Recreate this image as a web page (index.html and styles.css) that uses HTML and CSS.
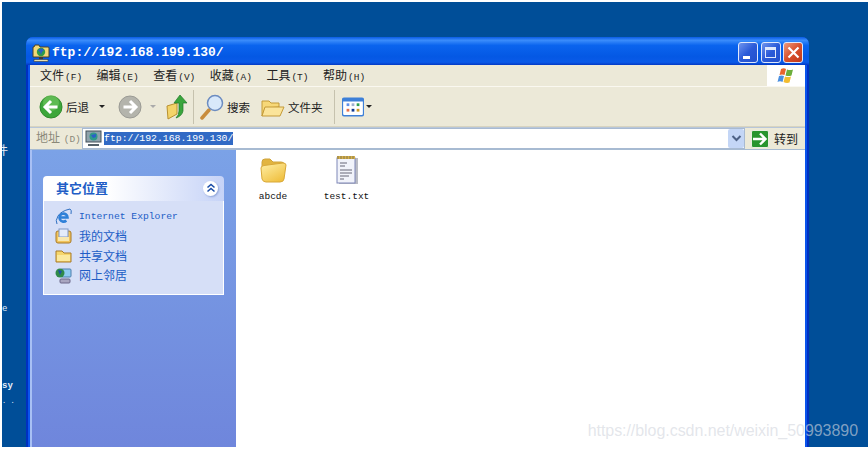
FILE: index.html
```html
<!DOCTYPE html>
<html lang="zh">
<head>
<meta charset="utf-8">
<title>ftp://192.168.199.130/</title>
<link rel="stylesheet" href="styles.css">
</head>
<body>
<div class="desktop">
  <span class="dlabel dl1">件</span>
  <span class="dlabel dl2">e</span>
  <span class="dlabel dl3">sy</span>
  <span class="dlabel dl4">. .</span>
  <div class="window">
    <div class="titlebar">
      <svg class="ticon" width="18" height="18" viewBox="0 0 18 18"><path d="M1 13V3h1l1-2h4l1 2h8q1 0 1 1v9z" fill="#f2d878" stroke="#4c4326"/><circle cx="9" cy="8" r="4.200" fill="#2f9a4a"/><path d="M6 6.500Q9 3 12 6l-2 2-1 3-1-3z" fill="#2b5fc8"/><path d="M7 13h4v2H7z" fill="#3a3a3a"/><rect x="2" y="15.500" width="14" height="2" fill="#e8e0b0" stroke="#3a3a3a" stroke-width=".6"/></svg>
      <span class="ttext">ftp://192.168.199.130/</span>
      <div class="wbtns">
        <span class="wbtn"><i class="bmin"></i></span>
        <span class="wbtn"><i class="bmax"></i></span>
        <span class="wbtn wclose"><svg width="13" height="13" viewBox="0 0 13 13"><path d="M1.500 1.500l10 10M11.500 1.500l-10 10" stroke="#fff" stroke-width="2.200"/></svg></span>
      </div>
    </div>
    <div class="menubar">
      <span class="mi mi1">文件<b class="mk">(F)</b></span><span class="mi">编辑<b class="mk">(E)</b></span><span class="mi">查看<b class="mk">(V)</b></span><span class="mi">收藏<b class="mk">(A)</b></span><span class="mi">工具<b class="mk">(T)</b></span><span class="mi">帮助<b class="mk">(H)</b></span>
      <div class="flag">
        <svg width="20" height="18" viewBox="0 0 20 18"><path d="M5 2q3-1.500 5 0l-1.500 6q-2.500-1-5 0z" fill="#e8642c"/><path d="M11 2.500q3 1 6 0l-1.500 6q-3 1-6 0z" fill="#6cae3c"/><path d="M3 9q2.500-1 5 0l-1.500 6q-2.500-1.500-5 0z" fill="#4a8fe0"/><path d="M9 9.500q3 1 6 0l-1.500 6q-3 1-6-.5z" fill="#f2bc30"/></svg>
      </div>
    </div>
    <div class="toolbar">
      <svg class="round" width="24" height="24" viewBox="0 0 24 24"><circle cx="12" cy="12" r="11" fill="#3da63a" stroke="#2f8a2c"/><circle cx="12" cy="8" r="8" fill="#7fd06a" opacity=".5"/><path d="M18.500 12H7M12 6l-6 6 6 6" fill="none" stroke="#fff" stroke-width="3"/></svg>
      <span class="tlabel tback">后退</span>
      <i class="caret c1"></i>
      <svg class="round r2" width="24" height="24" viewBox="0 0 24 24"><circle cx="12" cy="12" r="11" fill="#b4b4ac" stroke="#9a9a94"/><path d="M5.500 12H17M12 6l6 6-6 6" fill="none" stroke="#fff" stroke-width="3"/></svg>
      <i class="caret c2"></i>
      <svg class="up" width="22" height="26" viewBox="0 0 22 26"><path d="M1 12l10-3v11l-9 5z" fill="#f4d46a" stroke="#b89030"/><path d="M14 1l7 8h-4v8q-1 5-7 7 3-3 3-7V9H8z" fill="#3aa53c" stroke="#1f7a28" stroke-width=".7"/></svg>
      <i class="sep"></i>
      <svg class="search" width="26" height="26" viewBox="0 0 26 26"><path d="M3 24l7-8" stroke="#c88c3c" stroke-width="3.500" stroke-linecap="round"/><circle cx="16" cy="9" r="7.500" fill="#d8e8fa" stroke="#6c8cc0" stroke-width="1.500"/></svg>
      <span class="tlabel tsearch">搜索</span>
      <svg class="tfolder" width="24" height="22" viewBox="0 0 24 22"><path d="M1 5h7l2 2h8v4l-14 1-3 8z" fill="#f7d878" stroke="#c49a38"/><path d="M4 11h19l-4 9H1z" fill="#fbe49a" stroke="#c49a38"/></svg>
      <span class="tlabel tfolders">文件夹</span>
      <i class="sep s2"></i>
      <svg class="views" width="22" height="20" viewBox="0 0 24 20"><rect x=".5" y=".5" width="23" height="19" rx="2" fill="#fff" stroke="#3e80d8" stroke-width="1.500"/><rect x="1" y="1" width="22" height="3" fill="#3e80d8"/><g><rect x="5" y="6" width="3" height="3" fill="#6090e8"/><rect x="10.500" y="6" width="3" height="3" fill="#a0b0d0"/><rect x="16" y="6" width="3" height="3" fill="#30a050"/><rect x="5" y="12" width="3" height="3" fill="#e87048"/><rect x="10.500" y="12" width="3" height="3" fill="#103890"/><rect x="16" y="12" width="3" height="3" fill="#d09820"/></g></svg>
      <i class="caret c3"></i>
    </div>
    <div class="addrbar">
      <span class="alabel">地址 <b class="mk">(D)</b></span>
      <div class="abox">
        <svg class="aicon" width="17" height="17" viewBox="0 0 17 17"><rect x="1" y="1" width="15" height="11" fill="#8fa2ac" stroke="#45515a"/><circle cx="8.500" cy="6.500" r="4" fill="#2f9a8a"/><path d="M6 5l5-1 0 3-3 1z" fill="#2b5fc8"/><rect x="3" y="14" width="11" height="2" fill="#55616a"/></svg>
        <span class="aurl">ftp://192.168.199.130/</span>
        <span class="adrop"><svg width="11" height="9" viewBox="0 0 11 9"><path d="M1.500 2l4 4 4-4" fill="none" stroke="#4d6185" stroke-width="2"/></svg></span>
      </div>
      <span class="gobtn"><svg width="16" height="14" viewBox="0 0 16 14"><path d="M1 7h12M8 1.500L13.500 7 8 12.500" fill="none" stroke="#fff" stroke-width="2.400"/></svg></span>
      <span class="golabel">转到</span>
    </div>
    <div class="main">
      <aside class="sidebar">
        <section class="panel">
          <header class="phead">
            <span>其它位置</span>
            <span class="pbtn"><svg width="10" height="10" viewBox="0 0 10 10"><path d="M1.500 4.500L5 1.500l3.500 3M1.500 8.500L5 5.500l3.500 3" fill="none" stroke="#1d4fa8" stroke-width="1.600"/></svg></span>
          </header>
          <ul class="plist">
            <li><svg width="17" height="17" viewBox="0 0 17 17"><path d="M2 16Q0 13 3 8t12-7q2 1 1 5" fill="none" stroke="#2f6fc0" stroke-width="1"/><path d="M4.500 9.500h8a4 4 0 1 0-1.200 3" fill="none" stroke="#2f80d8" stroke-width="2.600"/></svg><span class="ltxt">Internet Explorer</span></li>
            <li><svg width="17" height="16" viewBox="0 0 17 16"><rect x="1" y="3" width="15" height="12" rx="2" fill="#f2c45c" stroke="#a87a28"/><rect x="4" y="1" width="9" height="8" fill="#e4ecfa" stroke="#7f98c8"/><rect x="3" y="9" width="11" height="4" fill="#f8e8b0"/></svg><span class="ltxt">我的文档</span></li>
            <li><svg width="17" height="15" viewBox="0 0 17 15"><path d="M1 3h6l2 2h7v9H1z" fill="#f6d66c" stroke="#a87a28"/><rect x="2" y="7" width="13" height="6" fill="#fbe99e"/></svg><span class="ltxt">共享文档</span></li>
            <li><svg width="17" height="17" viewBox="0 0 17 17"><rect x="6" y="2" width="10" height="8" rx="1" fill="#8ecbf0" stroke="#4f7fae"/><circle cx="5" cy="6" r="4.500" fill="#2f8a4a"/><path d="M3 3l4 1-2 4z" fill="#1d4fa8"/><rect x="5" y="12" width="10" height="4" rx="1" fill="#a9a6c0" stroke="#6c688a"/></svg><span class="ltxt">网上邻居</span></li>
          </ul>
        </section>
      </aside>
      <div class="files">
        <div class="file">
          <span class="ficon"><svg width="28" height="28" viewBox="0 0 28 28"><defs><linearGradient id="fg" x1="0" y1="0" x2=".7" y2="1"><stop offset="0" stop-color="#fff0a8"/><stop offset="1" stop-color="#f0c040"/></linearGradient></defs><path d="M3 6q0-3 3-3h5l3 3h8q3 0 3 2v4H3z" fill="#e2b440" stroke="#cfa43c"/><path d="M2 12q0-2 3-2.500L24 7q3 0 3 2l-2 14q-.5 3-4 3H7q-3 0-4-3z" fill="url(#fg)" stroke="#d8a838"/></svg></span>
          <span class="fname">abcde</span>
        </div>
        <div class="file">
          <span class="ficon"><svg width="24" height="30" viewBox="0 0 24 30"><rect x="4" y="3" width="19" height="26" fill="#b9bbc4"/><rect x="2" y="3" width="18" height="25" fill="#f1f3fa" stroke="#7f87b8"/><rect x="2" y="1" width="18" height="3" fill="#d6b04a"/><path d="M3 1v3M6 1v3M9 1v3M12 1v3M15 1v3M18 1v3" stroke="#6f6a50" stroke-width=".8"/><path d="M5 8h7M5 11h5M5 15h12M5 18h12M5 21h9M5 24h4" stroke="#667"/></svg></span>
          <span class="fname">test.txt</span>
        </div>
      </div>
    </div>
  </div>
  <span class="wm">https://blog.csdn.net/weixin_50993890</span>
</div>
</body>
</html>
```

FILE: styles.css
```css
* { box-sizing: border-box; }
html, body { margin: 0; padding: 0; background: #fff; overflow: hidden; }
body { width: 868px; height: 450px; }
.desktop { position: absolute; left: 2px; top: 2px; width: 866px; height: 445px; background: #004e98; overflow: hidden; }
.dlabel { position: absolute; left: 0; color: #e8eef8; font: 9px "Liberation Mono", monospace; line-height: 10px; }
.dl1 { top: 141px; font: 12px/14px "Noto Sans CJK SC", sans-serif; left: -6px; }
.dl2 { top: 302px; left: 0; }
.dl3 { top: 379px; font-weight: 700; }
.dl4 { top: 394px; font-size: 7px; }
.window { position: absolute; left: 24px; top: 35px; width: 783px; height: 410px; display: flex; flex-direction: column; border-radius: 7px 7px 0 0; overflow: hidden; background: linear-gradient(90deg, #0030c0 2px, #0a54ec 2px, #0a54ec 781px, #0030c0 781px); }
.titlebar { height: 28px; flex: none; display: flex; align-items: center; padding: 3px 6px 0 6px; background: linear-gradient(180deg, #0a5ce4 0%, #3a8cfb 12%, #0a64ee 30%, #0458e4 70%, #0a5ae8 90%, #0339c4 100%); }
.ticon { flex: none; margin-right: 2px; }
.ttext { color: #fff; font: 700 13px/16px "Liberation Mono", monospace; }
.wbtns { margin-left: auto; display: flex; gap: 2.500px; }
.wbtn { width: 20px; height: 21px; border: 1px solid #dfe8fb; border-radius: 3px; background: linear-gradient(135deg, #6f94ee 0%, #2a5ad8 50%, #2250cc 100%); position: relative; display: flex; align-items: center; justify-content: center; }
.wclose { background: linear-gradient(135deg, #ee9a7c 0%, #d8502c 50%, #c0381c 100%); }
.bmin { position: absolute; left: 4px; bottom: 3px; width: 7px; height: 3px; background: #fff; }
.bmax { width: 11px; height: 11px; border: 1px solid #dfe8fb; border-top-width: 3px; }
.menubar { height: 22px; flex: none; margin: 0 4px; background: #ece9d8; border-bottom: 1px solid #faf8f0; display: flex; align-items: center; font: 12px/14px "Noto Sans CJK SC", sans-serif; color: #222; }
.mi { flex: none; width: 56.600px; white-space: nowrap; padding-top: 1px; }
.mi1 { margin-left: 10px; }
.mk { font: 400 9.500px/14px "Liberation Mono", monospace; margin-left: 1px; }
.flag { margin-left: auto; width: 38px; height: 21px; background: #fff; display: flex; align-items: center; justify-content: center; }
.toolbar { height: 40px; flex: none; margin: 0 4px; background: #ece9d8; border-bottom: 1px solid #d8d4c0; display: flex; align-items: center; font: 11.500px/16px "Noto Sans CJK SC", sans-serif; color: #222; padding-left: 9px; }
.round { flex: none; }
.tlabel { flex: none; }
.tback { margin-left: 3px; width: 33px; }
.caret { flex: none; width: 0; height: 0; border-left: 3px solid transparent; border-right: 3px solid transparent; border-top: 3px solid #222; }
.r2 { margin-left: 13px; }
.c2 { border-top-color: #aaa; margin-left: 8px; }
.up { margin-left: 10px; flex: none; }
.sep { width: 1px; height: 34px; background: #c6c2ae; margin-left: 5px; flex: none; }
.search { margin-left: 5px; flex: none; }
.tsearch { margin-left: 2px; }
.tfolder { margin-left: 11px; flex: none; }
.tfolders { margin-left: 3px; }
.s2 { margin-left: 11px; }
.views { margin-left: 7px; flex: none; }
.c3 { margin-left: 2px; }
.addrbar { height: 23px; flex: none; margin: 0 4px; background: #ece9d8; border-top: 1px solid #b8c6d8; border-bottom: 1px solid #a7bbd2; display: flex; align-items: center; font: 12px/14px "Noto Sans CJK SC", sans-serif; }
.alabel { flex: none; color: #8a8878; width: 52px; padding-left: 6px; white-space: nowrap; }
.abox { flex: none; width: 663px; height: 21px; background: #fff; border: 1px solid #a8bad2; display: flex; align-items: center; padding-left: 2px; }
.aicon { flex: none; margin-right: 2px; }
.aurl { background: #316ac5; color: #fff; font: 9.800px/13px "Liberation Mono", monospace; }
.adrop { margin-left: auto; width: 16px; height: 19px; background: #c4d6f6; display: flex; align-items: center; justify-content: center; border-radius: 2px; }
.gobtn { flex: none; margin-left: 6px; width: 18px; height: 18px; border-radius: 2px; background: #28952e; border: 1px solid #e8eee0; display: flex; align-items: center; justify-content: center; }
.golabel { flex: none; margin-left: 5px; font-size: 12px; color: #222; }
.main { flex: 1; min-height: 0; margin: 0 4px; display: flex; padding-left: 2px; background: linear-gradient(90deg, #a8c0f4 2px, #fff 2px); }
.sidebar { width: 204px; flex: none; background: linear-gradient(180deg, #7ba2e7 0%, #6f86dc 100%); padding: 26px 12px 0 11px; }
.panel { width: 181px; }
.phead { height: 25px; border-radius: 4px 4px 0 0; background: linear-gradient(90deg, #fff 0%, #fff 35%, #c6d3f7 100%); display: flex; align-items: center; justify-content: space-between; padding: 0 6px 1px 13px; font: 700 13px/16px "Noto Sans CJK SC", sans-serif; color: #215dc6; }
.pbtn { width: 15px; height: 15px; border-radius: 50%; background: #fff; display: flex; align-items: center; justify-content: center; box-shadow: 1px 1px 2px #8ea4d8; }
.plist { list-style: none; margin: 0; padding: 6px 0 8px 11px; background: #d6dff7; border: 1px solid #fff; border-top: 0; height: 94px; }
.plist li { height: 19.500px; display: flex; align-items: center; gap: 7px; }
.plist svg { flex: none; }
.ltxt { font: 12px/14px "Noto Sans CJK SC", sans-serif; color: #215dc6; white-space: nowrap; }
.plist li:first-child .ltxt { font: 9.700px/13px "Liberation Mono", monospace; }
.files { flex: 1; display: flex; align-items: flex-start; padding: 5px 0 0 14px; gap: 27.500px; }
.file { width: 46px; display: flex; flex-direction: column; align-items: center; gap: 5px; }
.ficon { height: 30px; display: flex; align-items: center; justify-content: center; }
.fname { font: 9.500px/13px "Liberation Mono", monospace; color: #111; white-space: nowrap; }
.wm { position: absolute; right: 10px; top: 419px; color: rgba(210, 214, 222, .62); font: 16px/20px "Liberation Sans", sans-serif; letter-spacing: -.05px; white-space: nowrap; }
```
